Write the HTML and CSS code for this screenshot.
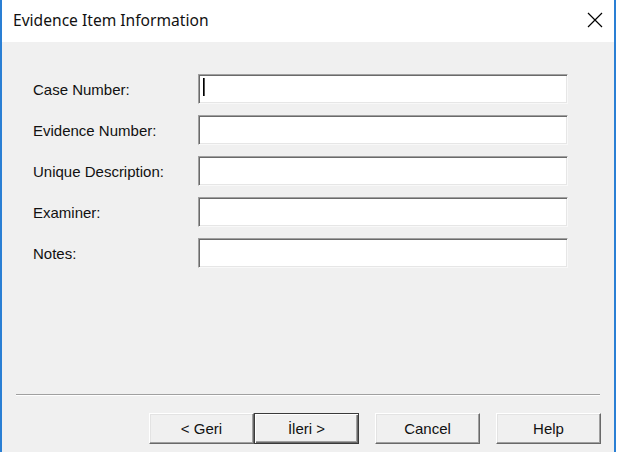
FILE: index.html
```html
<!DOCTYPE html>
<html>
<head>
<meta charset="utf-8">
<title>Evidence Item Information</title>
<link rel="stylesheet" href="styles.css">
</head>
<body>
<div class="window">
  <div class="titlebar">
    <span class="title">Evidence Item Information</span>
    <svg class="close" width="16" height="16" viewBox="0 0 16 16"><path d="M1 1 L15 15 M15 1 L1 15" stroke="#000" stroke-width="1.2" fill="none"/></svg>
  </div>
  <div class="content">
    <div class="form">
      <label class="label">Case Number:</label>
      <div class="field"><span class="caret"></span></div>
      <label class="label">Evidence Number:</label>
      <div class="field"></div>
      <label class="label">Unique Description:</label>
      <div class="field"></div>
      <label class="label">Examiner:</label>
      <div class="field"></div>
      <label class="label">Notes:</label>
      <div class="field"></div>
    </div>
    <div class="footer">
      <div class="separator"></div>
      <div class="buttons">
        <button class="btn">&lt; Geri</button>
        <button class="btn default">İleri &gt;</button>
        <button class="btn gap">Cancel</button>
        <button class="btn gap">Help</button>
      </div>
    </div>
  </div>
</div>
</body>
</html>
```

FILE: styles.css
```css
html, body {
  margin: 0;
  padding: 0;
  background: #ffffff;
}
body {
  width: 617px;
  height: 452px;
  overflow: hidden;
}
.window {
  width: 612px;
  height: 452px;
  border-left: 2px solid #2a7fd4;
  border-right: 2px solid #2a7fd4;
  display: flex;
  flex-direction: column;
  box-sizing: content-box;
}
.titlebar {
  height: 42px;
  background: #ffffff;
  display: flex;
  align-items: center;
  justify-content: space-between;
  padding: 0 10px 0 11px;
  flex: none;
}
.title {
  font-family: "Noto Sans", "Liberation Sans", sans-serif;
  font-size: 15.6px;
  color: #111;
  margin-top: -3px;
}
.close {
  margin-top: -3px;
  margin-right: 1px;
}
.content {
  flex: 1;
  background: #f0f0f0;
  display: flex;
  flex-direction: column;
}
.form {
  display: grid;
  grid-template-columns: 165px 370px;
  grid-auto-rows: 30px;
  row-gap: 11px;
  padding: 32px 0 0 31px;
  align-items: center;
}
.label {
  font-family: "Liberation Sans", Arial, sans-serif;
  font-size: 15px;
  color: #111;
}
.field {
  height: 30px;
  box-sizing: border-box;
  background: #ffffff;
  border: 1px solid;
  border-color: #a0a0a0 #f8f8f8 #f8f8f8 #a0a0a0;
  box-shadow: inset 1px 1px #6a6a6a, inset -1px -1px #e6e6e6;
  position: relative;
}
.caret {
  position: absolute;
  left: 4px;
  top: 3px;
  width: 1px;
  height: 18px;
  background: #000;
  box-shadow: 1px 0 #555;
}
.footer {
  margin-top: auto;
  padding-bottom: 8px;
}
.separator {
  margin: 0 14px;
  height: 1px;
  background: #a0a0a0;
  border-bottom: 1px solid #ffffff;
}
.buttons {
  display: flex;
  justify-content: flex-end;
  padding-right: 13px;
  margin-top: 17px;
}
.btn {
  width: 105px;
  height: 31px;
  box-sizing: border-box;
  margin: 0;
  padding: 0;
  background: #f0f0f0;
  font-family: "Liberation Sans", Arial, sans-serif;
  font-size: 15px;
  color: #111;
  border: 1px solid;
  border-color: #ffffff #696969 #696969 #ffffff;
  box-shadow: inset -1px -1px #a0a0a0, inset 1px 1px #e3e3e3;
}
.btn.default {
  border-color: #3a3a3a;
  box-shadow: inset 1px 1px #ffffff, inset -1px -1px #696969, inset -2px -2px #a0a0a0;
}
.btn.gap {
  margin-left: 16px;
}
```
